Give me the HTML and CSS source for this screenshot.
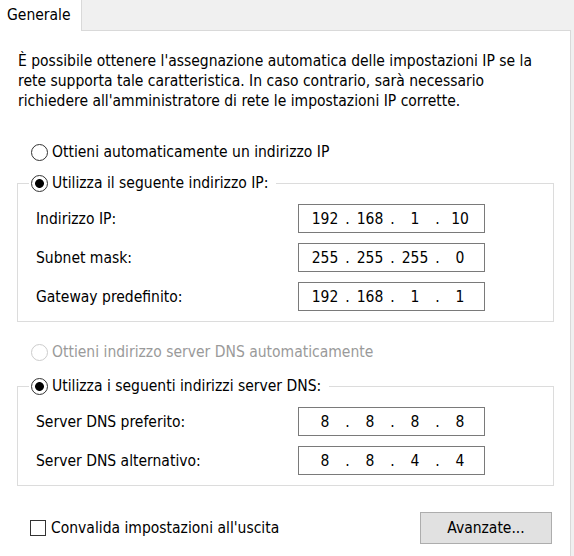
FILE: index.html
```html
<!DOCTYPE html>
<html lang="it">
<head>
  <meta charset="UTF-8">
  <title>Proprietà - Protocollo Internet versione 4 (TCP/IPv4)</title>
  <link rel="stylesheet" href="styles.css">
</head>
<body>

<div class="tabs">
  <div class="tab">Generale</div>
</div>

<div class="panel">
  <p class="intro">È possibile ottenere l'assegnazione automatica delle impostazioni IP se la<br>rete supporta tale caratteristica. In caso contrario, sarà necessario<br>richiedere all'amministratore di rete le impostazioni IP corrette.</p>

  <label class="opt opt-ip"><input type="radio" name="ip">Ottieni automaticamente un indirizzo IP</label>

  <fieldset class="group group-ip">
    <legend><label class="opt"><input type="radio" name="ip" checked>Utilizza il seguente indirizzo IP:</label></legend>
    <div class="rows">
      <div class="row">
        <span class="lbl">Indirizzo IP:</span>
        <div class="ipbox"><span class="oct">192</span><span class="dot">.</span><span class="oct">168</span><span class="dot">.</span><span class="oct">1</span><span class="dot">.</span><span class="oct">10</span></div>
      </div>
      <div class="row">
        <span class="lbl">Subnet mask:</span>
        <div class="ipbox"><span class="oct">255</span><span class="dot">.</span><span class="oct">255</span><span class="dot">.</span><span class="oct">255</span><span class="dot">.</span><span class="oct">0</span></div>
      </div>
      <div class="row">
        <span class="lbl">Gateway predefinito:</span>
        <div class="ipbox"><span class="oct">192</span><span class="dot">.</span><span class="oct">168</span><span class="dot">.</span><span class="oct">1</span><span class="dot">.</span><span class="oct">1</span></div>
      </div>
    </div>
  </fieldset>

  <label class="opt opt-dns disabled"><input type="radio" name="dns" disabled>Ottieni indirizzo server DNS automaticamente</label>

  <fieldset class="group group-dns">
    <legend><label class="opt"><input type="radio" name="dns" checked>Utilizza i seguenti indirizzi server DNS:</label></legend>
    <div class="rows">
      <div class="row">
        <span class="lbl">Server DNS preferito:</span>
        <div class="ipbox"><span class="oct">8</span><span class="dot">.</span><span class="oct">8</span><span class="dot">.</span><span class="oct">8</span><span class="dot">.</span><span class="oct">8</span></div>
      </div>
      <div class="row">
        <span class="lbl">Server DNS alternativo:</span>
        <div class="ipbox"><span class="oct">8</span><span class="dot">.</span><span class="oct">8</span><span class="dot">.</span><span class="oct">4</span><span class="dot">.</span><span class="oct">4</span></div>
      </div>
    </div>
  </fieldset>

  <div class="bottom">
    <label class="opt check"><input type="checkbox">Convalida impostazioni all'uscita</label>
    <button type="button">Avanzate...</button>
  </div>
</div>

</body>
</html>
```

FILE: styles.css
```css
body {
  margin: 0; height: 556px; display: flex; flex-direction: column;
  background: #f0f0f0; color: #000;
  font-family: "DejaVu Sans Condensed", "DejaVu Sans", sans-serif; font-size: 15.5px; line-height: 20px;
}
.tabs { display: flex; height: 30px; }
.tab {
  width: 82px; height: 31px; margin-bottom: -1px; padding-left: 7px; box-sizing: border-box;
  background: #fff; border-right: 1px solid #d9d9d9; line-height: 30px; position: relative; z-index: 1;
}
.panel {
  flex: 1; margin-right: 3px; padding: 20px 16px 0 17px;
  background: #fff; border-top: 1px solid #d9d9d9; border-right: 1px solid #d9d9d9;
}
.intro { margin: 0 0 0 1px; }

.opt { display: flex; align-items: center; height: 20px; white-space: nowrap; }
.opt input {
  appearance: none; -webkit-appearance: none; margin: 0 4px 0 0;
  width: 17px; height: 17px; border: 1px solid #333; background: #fff; flex: none;
}
.opt input[type="radio"] { border-radius: 50%; }
.opt input[type="radio"]:checked { background: radial-gradient(circle, #000 0 4px, #fff 4.8px); }
.opt input[type="checkbox"] { width: 16px; height: 16px; margin-right: 5px; }
.opt-ip { margin: 31px 0 0 14px; }
.opt-dns { margin: 20px 0 0 14px; }
.disabled { color: #9a9a9a; }
.disabled input { border-color: #cccccc; }

.group { margin: 0; padding: 0; border: 1px solid #dcdcdc; min-width: 0; }
.group-ip { margin-top: 11px; }
.group-dns { margin-top: 14px; }
.group legend { margin-left: 11px; padding: 0 8px 0 2px; }
.rows { display: flex; flex-direction: column; gap: 10px; padding: 11px 0 10px 18px; }
.row { display: flex; align-items: center; height: 29px; }
.lbl { width: 262px; }
.ipbox {
  display: flex; width: 187px; height: 29px; box-sizing: border-box; padding-left: 7px;
  border: 1px solid #7a7a7a; align-items: center;
}
.oct { width: 38px; text-align: center; }
.dot { width: 7px; text-align: center; }

.bottom { display: flex; justify-content: space-between; align-items: center; margin-top: 26px; }
.check { margin-left: 13px; }
button {
  width: 132px; height: 32px; margin-right: 2px; padding: 0;
  background: #e1e1e1; border: 1px solid #adadad; color: #000;
  font: inherit; cursor: pointer;
}
button:hover { background: #e5f1fb; border-color: #0078d7; }
```
